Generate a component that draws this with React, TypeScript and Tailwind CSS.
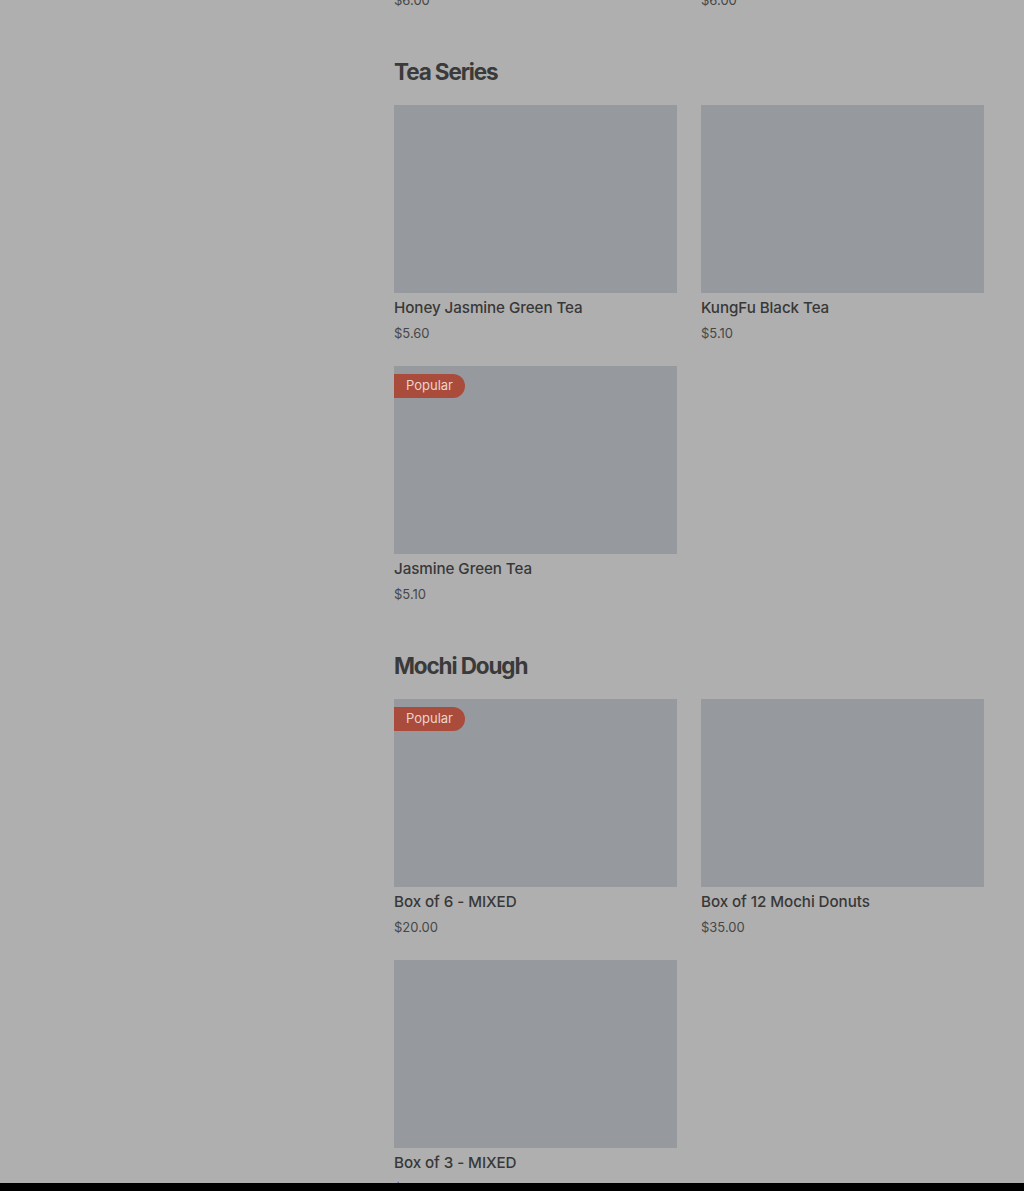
const sections = [
  {
    title: "Tea Series",
    items: [
      { name: "Honey Jasmine Green Tea", price: "$5.60", popular: false },
      { name: "KungFu Black Tea", price: "$5.10", popular: false },
      { name: "Jasmine Green Tea", price: "$5.10", popular: true },
    ],
  },
  {
    title: "Mochi Dough",
    items: [
      { name: "Box of 6 - MIXED", price: "$20.00", popular: true },
      { name: "Box of 12 Mochi Donuts", price: "$35.00", popular: false },
      { name: "Box of 3 - MIXED", price: "$10.95", popular: false },
    ],
  },
];

const Card = ({ name, price, popular }: { name: string; price: string; popular: boolean }) => (
  <div className="flex flex-col">
    <div className="relative h-[188px] bg-[#96999d]">
      {popular && (
        <span className="absolute left-0 top-2 flex h-6 items-center rounded-r-full bg-[#a94c3b] pl-3 pr-3 text-[13px] text-[#ecd3cc]">
          Popular
        </span>
      )}
    </div>
    <div className="mt-[3px] text-[15.2px] leading-6 font-medium tracking-[-0.005em] text-[#383838]">{name}</div>
    <div className="mt-[3px] text-[13px] leading-5 text-[#474747]">{price}</div>
  </div>
);

export default function App() {
  return (
    <div
      className="flex h-[1191px] flex-col overflow-hidden bg-[#afafaf]"
      style={{ fontFamily: "Inter, 'Noto Sans', sans-serif" }}
    >
      <div className="flex flex-1 overflow-hidden">
        <div className="w-[394px] shrink-0" />
        <main className="w-[590px] shrink-0">
          <div className="-mt-[10px] grid grid-cols-2 gap-x-6 text-[13px] leading-5 text-[#474747]">
            <div>$6.00</div>
            <div>$6.00</div>
          </div>
          {sections.map((section) => (
            <section key={section.title} className="mt-[46px]">
              <h2 className="text-[22.5px] leading-8 font-bold tracking-[-0.05em] text-[#3a3a3a]">
                {section.title}
              </h2>
              <div className="mt-[17px] grid grid-cols-2 gap-x-6 gap-y-[23px]">
                {section.items.map((item) => (
                  <Card key={item.name} {...item} />
                ))}
              </div>
            </section>
          ))}
        </main>
      </div>
      <div className="h-2 shrink-0 bg-black" />
    </div>
  );
}
